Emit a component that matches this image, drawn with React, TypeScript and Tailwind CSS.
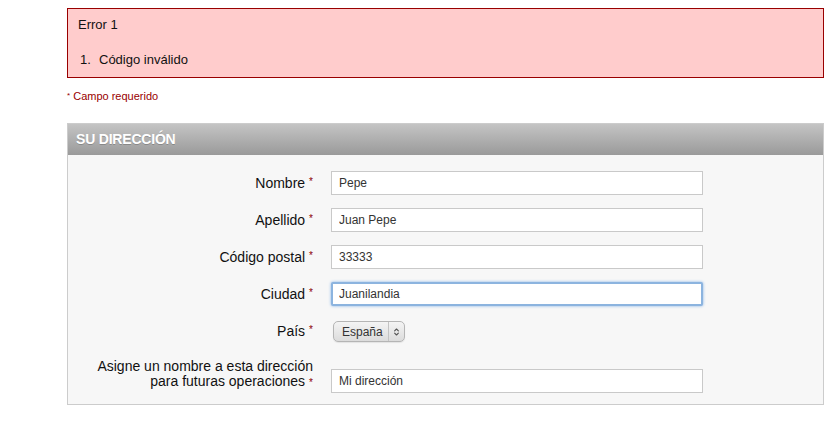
import { ChevronsUpDown } from 'lucide-react';

const font = { fontFamily: '"Liberation Sans", Arial, sans-serif' };

function Req() {
  return <span className="ml-[4px] text-[10px] text-[#8b0000] align-top relative top-[1px]">*</span>;
}

function Row({ label, value, focus }: { label: string; value: string; focus?: boolean }) {
  return (
    <div className="flex items-center h-[24px]">
      <div className="w-[245px] text-right text-[14px] text-[#111]">
        {label}
        <Req />
      </div>
      <input
        readOnly
        value={value}
        className={
          focus
            ? 'ml-[18px] w-[372px] h-[24px] px-[6px] text-[12px] text-[#333] bg-white border-2 border-[#8cb4df] rounded-[2px] shadow-[0_0_3px_#7fb0e6] outline-none'
            : 'ml-[18px] w-[372px] h-[24px] px-[7px] text-[12px] text-[#333] bg-white border border-[#c9c9c9] outline-none'
        }
        style={font}
      />
    </div>
  );
}

export default function App() {
  return (
    <div className="w-[836px] h-[422px] bg-white pt-[8px]" style={font}>
      <div className="ml-[67px] w-[757px] h-[70px] bg-[#ffcccc] border border-[#990000] px-[10px] text-[13px] text-[#111]">
        <div className="mt-[9px] leading-[14px]">Error 1</div>
        <div className="mt-[21px] leading-[14px] flex">
          <span className="ml-[2px] w-[19px]">1.</span>
          <span>Código inválido</span>
        </div>
      </div>
      <div className="ml-[67px] mt-[11px] text-[11px] leading-[14px] text-[#990000]">
        <span className="text-[8px] align-top">*</span> Campo requerido
      </div>
      <div className="ml-[67px] mt-[20px] w-[757px] border border-[#cccccc] bg-[#f7f7f7]">
        <div className="h-[31px] flex items-center px-[8px] bg-gradient-to-b from-[#c4c4c4] to-[#9a9a9a] text-white font-bold text-[14px] tracking-[-0.2px] [text-shadow:0_1px_0_rgba(0,0,0,0.2)]">
          SU DIRECCIÓN
        </div>
        <div className="pt-[16px] pb-[11px] flex flex-col gap-[13px]">
          <Row label="Nombre" value="Pepe" />
          <Row label="Apellido" value="Juan Pepe" />
          <Row label="Código postal" value="33333" />
          <Row label="Ciudad" value="Juanilandia" focus />
          <div className="flex items-center h-[21px] mt-[2px]">
            <div className="w-[245px] text-right text-[14px] text-[#111]">
              País
              <Req />
            </div>
            <div className="ml-[20px] h-[21px] flex items-center rounded-[5px] border border-[#b5b5b5] bg-gradient-to-b from-[#f4f4f4] to-[#dcdcdc] text-[12px] text-[#333] shadow-[0_1px_1px_rgba(0,0,0,0.08)]">
              <span className="pl-[8px] pr-[5px]">España</span>
              <span className="h-full w-[1px] bg-[#c3c3c3]" />
              <ChevronsUpDown className="mx-[3px] w-[9px] h-[10px] text-[#555]" strokeWidth={3} />
            </div>
          </div>
          <div className="flex items-end mt-[4px]">
            <div className="w-[245px] text-right text-[14px] leading-[15px] text-[#111] pb-[4px]">
              Asigne un nombre a esta dirección
              <br />
              para futuras operaciones
              <Req />
            </div>
            <input
              readOnly
              value="Mi dirección"
              className="ml-[18px] w-[372px] h-[24px] px-[7px] text-[12px] text-[#333] bg-white border border-[#c9c9c9] outline-none"
              style={font}
            />
          </div>
        </div>
      </div>
    </div>
  );
}
